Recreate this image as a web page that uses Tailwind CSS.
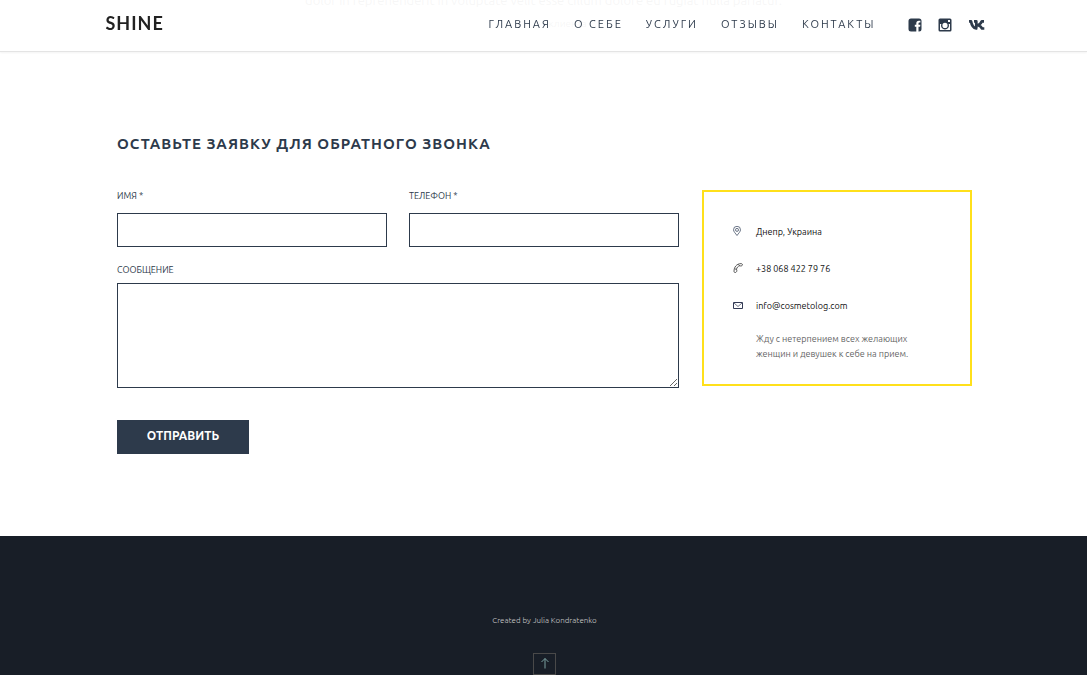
<!DOCTYPE html>
<html lang="ru">
<head>
<meta charset="utf-8">
<meta name="viewport" content="width=device-width, initial-scale=1">
<title>Shine</title>
<script src="https://cdn.jsdelivr.net/npm/@tailwindcss/browser@4"></script>
</head>
<body class="min-h-screen overflow-x-hidden bg-white font-['Ubuntu','Noto_Sans',sans-serif] text-[#2d3a4b]">
<header class="fixed inset-x-0 top-0 z-10 border-b border-[#e4e4e4] bg-white/95 shadow-xs">
  <div class="mx-auto flex h-[51px] max-w-[884px] items-center pr-px pb-1">
    <a href="#" class="pb-0.5 pl-1 font-['Lato',sans-serif] text-lg font-bold tracking-[1px] text-[#222]">SHINE</a>
    <nav class="ml-auto flex gap-[23px] pt-0.5 text-[11px] tracking-[2px]">
      <a href="#main">ГЛАВНАЯ</a>
      <a href="#about">О СЕБЕ</a>
      <a href="#services">УСЛУГИ</a>
      <a href="#reviews">ОТЗЫВЫ</a>
      <a href="#contacts">КОНТАКТЫ</a>
    </nav>
    <div class="ml-8 flex items-center gap-4 pt-0.5">
      <a href="#" aria-label="Facebook"><svg class="size-3.5" viewBox="0 0 14 14" fill="currentColor"><path d="M3 .5h8A2.500 2.500 0 0 1 13.500 3v8a2.500 2.500 0 0 1-2.500 2.500H10.500V8.700h1.600l.3-2H10.500V5.500c0-.6.3-.9.9-.9h1V2.700H10.800c-1.700 0-2.500 1-2.500 2.500v1.500H6.800v2h1.500v4.800H3A2.500 2.500 0 0 1 .5 11V3A2.500 2.500 0 0 1 3 .5z"/></svg></a>
      <a href="#" aria-label="Instagram"><svg class="size-3.5" viewBox="0 0 14 14" fill="currentColor" fill-rule="evenodd"><path d="M2 .5h10A1.500 1.500 0 0 1 13.500 2v10a1.500 1.500 0 0 1-1.500 1.500H2A1.500 1.500 0 0 1 .5 12V2A1.500 1.500 0 0 1 2 .5zM10 2v2h2V2zM2 6v6h10V6h-1.300a4 4 0 1 1-7.400 0zM7 4.800a2.600 2.600 0 1 0 0 5.200 2.600 2.600 0 0 0 0-5.200z"/></svg></a>
      <a href="#" aria-label="ВКонтакте" class="pt-px"><svg class="h-3 w-[17px]" viewBox="0 0 17 12" fill="none" stroke="currentColor" stroke-width="2.700"><path d="M1 2.300H3C3.400 5 5 8.800 8.300 9.500M6 2.300h2.300v7.200h1M9.300 6.300C11.500 6 13 4.200 13.800 2.300H16M10.300 6.300c2 .3 3 1.700 3.800 3.200h2.200" stroke-linejoin="round"/></svg></a>
    </div>
  </div>
</header>

<main>
  <section id="reviews" class="flex h-[51px] flex-col items-center justify-start overflow-hidden text-[13px] whitespace-nowrap text-[#555]">
    <p class="-mt-2 leading-4">dolor in reprehenderit in voluptate velit esse cillum dolore eu fugiat nulla pariatur.</p>
    <p class="mt-2 pl-12 text-[10px] leading-4">клиента</p>
  </section>

  <section id="contacts" class="mx-auto max-w-[857px] pt-[81px] pb-[82px] pl-0.5">
    <h2 class="text-[15px] leading-6 font-bold tracking-[1px]">ОСТАВЬТЕ ЗАЯВКУ ДЛЯ ОБРАТНОГО ЗВОНКА</h2>
    <div class="mt-[34px] grid grid-cols-[562fr_270fr] items-start gap-[23px]">
      <form class="grid grid-cols-2 gap-x-[22px] text-[9px] leading-3" onsubmit="return false">
        <div>
          <label for="name" class="block">ИМЯ *</label>
          <input id="name" type="text" class="mt-[11px] block h-[34px] w-full border border-[#2d3a4b] px-2 text-xs outline-none">
        </div>
        <div>
          <label for="phone" class="block">ТЕЛЕФОН *</label>
          <input id="phone" type="tel" class="mt-[11px] block h-[34px] w-full border border-[#2d3a4b] px-2 text-xs outline-none">
        </div>
        <div class="col-span-2 mt-[17px]">
          <label for="message" class="block">СООБЩЕНИЕ</label>
          <textarea id="message" class="mt-[7px] block h-[105px] w-full resize border border-[#2d3a4b] p-2 text-xs outline-none"></textarea>
        </div>
        <button type="submit" class="mt-8 h-[34px] w-[132px] bg-[#2d3a4b] pb-0.5 text-xs font-bold text-white">ОТПРАВИТЬ</button>
      </form>
      <aside class="border-2 border-[#ffe01b] pt-[33px] pr-8 pb-[22px] pl-[29px] text-[9px] leading-[15px] text-[#111]">
        <ul class="flex flex-col gap-[22px]">
          <li class="flex items-center gap-[13px]"><svg class="mb-1 size-2.5 text-[#46536a]" viewBox="0 0 10 10" fill="none" stroke="currentColor" stroke-width=".8"><path d="M4 9.500C2.500 7.400.5 5.500.5 3.800a3.500 3.500 0 0 1 7 0C7.500 5.500 5.500 7.400 4 9.500z"/><circle cx="4" cy="3.900" r="1.500"/></svg>Днепр, Украина</li>
          <li class="flex items-center gap-[13px]"><svg class="mb-1 size-2.5 text-[#333]" viewBox="0 0 10 10" fill="none" stroke="currentColor" stroke-width=".8"><path d="M1 8.500C1 4 3.500.8 8 .6c1 0 1.600.6 1.400 1.400-.2.900-1.500 1.200-2.700.8-1.700.4-2.900 1.700-3.200 3.500.6.9.4 2.300-.4 2.900-.8.6-2.100.3-2.100-.7zM5.500 1.500l1.200 1.300M1.500 5.800l2 .5"/></svg><a href="tel:+380684227976">+38 068 422 79 76</a></li>
          <li class="flex items-center gap-[13px]"><svg class="mb-1 size-2.5 text-[#333a55]" viewBox="0 0 10 10" fill="none" stroke="currentColor"><path d="M.5 2.500h9v6h-9z"/><path d="M1 3l4 3.500L9 3" stroke-width=".7"/></svg><a href="mailto:info@cosmetolog.com">info@cosmetolog.com</a></li>
        </ul>
        <p class="mt-[18px] pl-[23px] text-[#666]">Жду с нетерпением всех желающих<br>женщин и девушек к себе на прием.</p>
      </aside>
    </div>
  </section>
</main>

<footer class="flex flex-col items-center bg-[#181e27] pt-[77px] pl-0.5 text-[8px] leading-4 text-[#ccc]">
  <p class="font-light">Created by Julia Kondratenko</p>
  <a href="#" aria-label="Наверх" class="mt-6 flex h-[22px] w-[23px] items-center justify-center border border-[#494949] pb-0.5 text-[#7aa0a0]"><svg class="h-3 w-2.5" viewBox="0 0 10 12" fill="none" stroke="currentColor"><path d="M5 11.500V1.500M1.500 5L5 1.500 8.500 5"/></svg></a>
</footer>
</body>
</html>
